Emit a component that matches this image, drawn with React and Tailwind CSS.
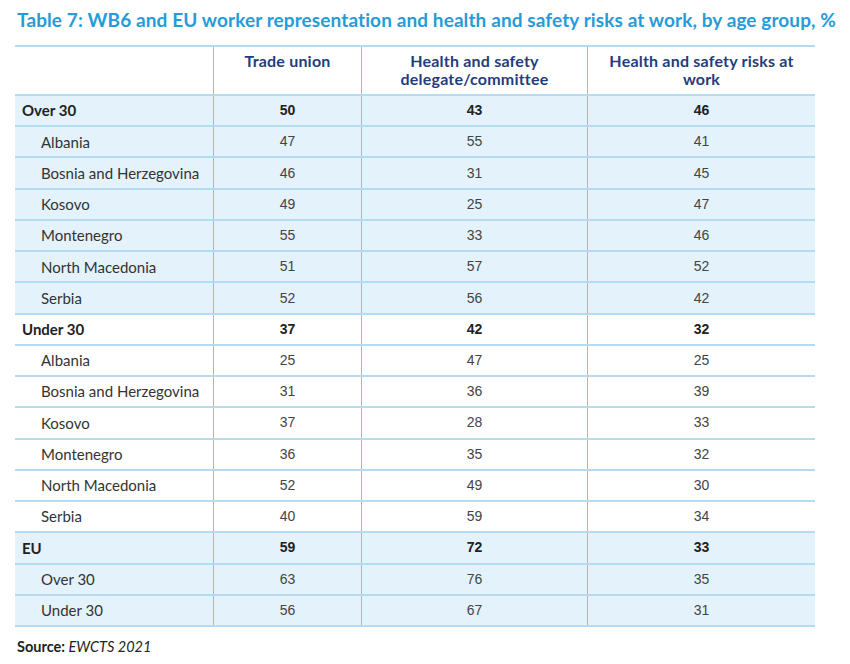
import React from "react";

const rows = [
  { label: "Over 30", vals: [50, 43, 46], bold: true, blue: true },
  { label: "Albania", vals: [47, 55, 41], blue: true },
  { label: "Bosnia and Herzegovina", vals: [46, 31, 45], blue: true },
  { label: "Kosovo", vals: [49, 25, 47], blue: true },
  { label: "Montenegro", vals: [55, 33, 46], blue: true },
  { label: "North Macedonia", vals: [51, 57, 52], blue: true },
  { label: "Serbia", vals: [52, 56, 42], blue: true },
  { label: "Under 30", vals: [37, 42, 32], bold: true },
  { label: "Albania", vals: [25, 47, 25] },
  { label: "Bosnia and Herzegovina", vals: [31, 36, 39] },
  { label: "Kosovo", vals: [37, 28, 33] },
  { label: "Montenegro", vals: [36, 35, 32] },
  { label: "North Macedonia", vals: [52, 49, 30] },
  { label: "Serbia", vals: [40, 59, 34] },
  { label: "EU", vals: [59, 72, 33], bold: true, blue: true },
  { label: "Over 30", vals: [63, 76, 35], blue: true },
  { label: "Under 30", vals: [56, 67, 31], blue: true },
];

const cols = "grid grid-cols-[198px_148px_226px_228px]";

export default function App() {
  return (
    <div className="w-[850px] h-[664px] bg-white font-['Lato','Open_Sans',sans-serif] relative">
      <h1 className="pl-[17px] pt-[9px] text-[19px] leading-[22px] font-bold text-[#259cd8] tracking-[0.1px]">
        Table 7: WB6 and EU worker representation and health and safety risks at work, by age group, %
      </h1>

      <div className="ml-[15px] mt-[14px] w-[800px] border-t-2 border-[#b5dbf1]">
        <div className={`${cols} h-[49px] border-b-2 border-[#b5dbf1] text-[16px] leading-[18px] font-bold text-[#1f3d7c] text-center tracking-[0.2px]`}>
          <div />
          <div className="border-l border-[#85c3e7] pt-[5px]">Trade union</div>
          <div className="border-l border-[#85c3e7] pt-[5px]">
            Health and safety
            <br />
            delegate/committee
          </div>
          <div className="border-l border-[#85c3e7] pt-[5px]">
            Health and safety risks at
            <br />
            work
          </div>
        </div>

        {rows.map((r, i) => (
          <div
            key={i}
            className={`${cols} h-[31.24px] border-b-2 border-[#b5dbf1] ${r.blue ? "bg-[#e3f2fb]" : "bg-white"}`}
          >
            <div
              className={`flex items-center text-[15px] ${r.bold ? "pl-[7px] font-bold text-[#222]" : "pl-[26px] text-[#333]"}`}
            >
              {r.label}
            </div>
            {r.vals.map((v, j) => (
              <div
                key={j}
                className={`border-l border-[#85c3e7] flex items-center justify-center font-['Liberation_Sans',Arial,sans-serif] text-[14px] ${r.bold ? "font-bold text-[#222]" : "text-[#444]"}`}
              >
                {v}
              </div>
            ))}
          </div>
        ))}
      </div>

      <p className="pl-[17px] mt-[9px] text-[14.5px] text-[#222]">
        <span className="font-bold">Source: </span>
        <span className="italic">EWCTS 2021</span>
      </p>
    </div>
  );
}
